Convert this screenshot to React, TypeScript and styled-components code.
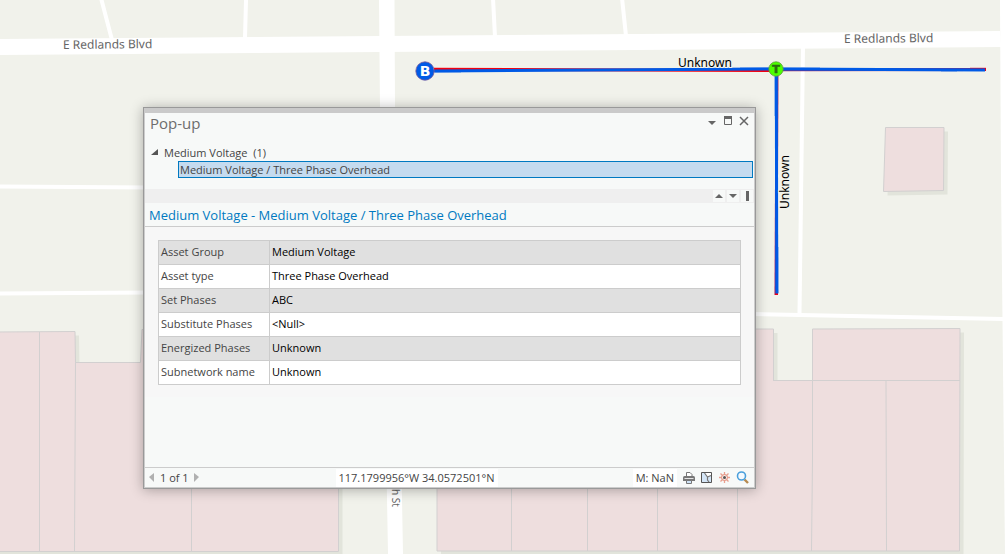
import React from "react";
import styled, { createGlobalStyle } from "styled-components";

const GlobalStyle = createGlobalStyle`
  *, *::before, *::after { box-sizing: border-box; }
  body {
    margin: 0;
    font-family: "Open Sans", "Noto Sans", sans-serif;
    font-size: 11px;
    color: #444;
  }
  button { font: inherit; color: inherit; }
`;

const Stage = styled.main`
  position: relative;
  display: flex;
  min-height: 100vh;
  padding: 107px 250px 65px 143px;
  background: #f1f2eb;
  overflow: hidden;
`;

const MapCanvas = styled.svg`
  position: absolute;
  inset: 0;
  width: 100%;
  height: 100%;
`;

const Popup = styled.section`
  position: relative;
  flex: 1;
  min-width: 0;
  display: flex;
  flex-direction: column;
  border: 1px solid #999;
  box-shadow: 0 1px 12px rgba(0, 0, 0, 0.3);
  background: #f7f9f8;
`;

const TopEdge = styled.div`
  height: 5px;
  background: #cacaca;
`;

const Frame = styled.div`
  flex: 1;
  display: flex;
  flex-direction: column;
  border: solid #ccc;
  border-width: 0 1px 1px;
`;

const TitleBar = styled.header`
  display: flex;
  align-items: flex-start;
  justify-content: space-between;
  height: 22px;
  padding: 0 2px 0 5px;
`;

const Title = styled.h1`
  margin: 0;
  font-size: 15px;
  font-weight: 400;
  line-height: 20px;
  color: #6d6d6d;
`;

const Controls = styled.div`
  display: flex;
`;

const IconButton = styled.button<{ $w?: number; $h?: number; $light?: boolean }>`
  display: flex;
  align-items: center;
  justify-content: center;
  width: ${(p) => p.$w ?? 16}px;
  height: ${(p) => p.$h ?? 16}px;
  padding: 0;
  border: 0;
  background: ${(p) => (p.$light ? "#f7f9f8" : "transparent")};
`;

const Tree = styled.div`
  height: 54px;
  padding-top: 9px;
`;

const GroupButton = styled.button`
  display: flex;
  align-items: center;
  gap: 6px;
  height: 17px;
  padding: 0 0 0 6px;
  border: 0;
  background: none;
  line-height: 17px;
  white-space: pre;
`;

const FeatureButton = styled.button`
  display: block;
  width: calc(100% - 34px);
  height: 17px;
  margin-left: 33px;
  padding: 0 1px;
  border: 1px solid #0079c1;
  background: #c5dbef;
  line-height: 15px;
  text-align: left;
`;

const Splitter = styled.div`
  display: flex;
  justify-content: flex-end;
  align-items: center;
  gap: 2px;
  height: 14px;
  padding-right: 1px;
  background: #efefef;
`;

const FeatureTitle = styled.h2`
  margin: 0;
  height: 24px;
  padding: 0 4px;
  border-bottom: 1px solid #ccc;
  font-size: 13px;
  font-weight: 400;
  line-height: 24px;
  color: #0079c1;
`;

const Body = styled.div`
  flex: 1;
  padding: 13px 13px 12px;
  background: linear-gradient(#f7f7f7 170px, #f7f9f8 170px);
`;

const Table = styled.table`
  width: 100%;
  border-collapse: collapse;
  line-height: 20px;
`;

const Row = styled.tr`
  height: 24px;
  background: #fff;
  &:nth-child(odd) { background: #e0e0e0; }
`;

const Label = styled.th`
  width: 111px;
  padding: 0 2px 1px;
  border: 1px solid #ccc;
  font-weight: 400;
  text-align: left;
  white-space: nowrap;
`;

const Value = styled.td`
  padding: 0 2px 1px;
  border: 1px solid #ccc;
  color: #000;
`;

const Footer = styled.footer`
  display: grid;
  grid-template-columns: 1fr auto 1fr;
  align-items: center;
  height: 20px;
  border-top: 1px solid #ccc;
`;

const Pager = styled.nav`
  display: flex;
  align-items: center;
  gap: 4px;
  padding-left: 3px;
`;

const Field = styled.output`
  padding: 0 3px;
  background: #fff;
  line-height: 18px;
`;

const Coordinates = styled(Field)`
  margin-right: 66px;
`;

const Tools = styled.div`
  display: flex;
  align-items: center;
  justify-content: flex-end;
  padding-right: 2px;
`;

const Measure = styled(Field)`
  margin-right: 3px;
`;

const rows: [string, string][] = [
  ["Asset Group", "Medium Voltage"],
  ["Asset type", "Three Phase Overhead"],
  ["Set Phases", "ABC"],
  ["Substitute Phases", "<Null>"],
  ["Energized Phases", "Unknown"],
  ["Subnetwork name", "Unknown"],
];

const eastBlock = "M437 329H773.5V380.500H812.500V329L960 328.500L959.500 551H437Z";
const westBlock = "M-5 332L75 331.500L75.500 362.500H140.500L142 329.500H338.500V551.500H-5Z";
const house = "M885.500 127.500H944L943.500 190.500L883.500 191.500Z";

function BaseMap() {
  return (
    <MapCanvas viewBox="0 0 1006 554" preserveAspectRatio="xMidYMid slice" role="img" aria-label="Street map with medium voltage lines">
      <g fill="#fff">
        <path d="M0 39L1000 31L1001 47L0 55Z" />
        <path d="M379 0H394.500L395 110L403 554H388L380 110Z" />
        <path d="M1000 0H1006V554H1005L1001 180Z" />
      </g>
      <g stroke="#fff" strokeWidth="4" fill="none">
        <path d="M101 -2L112 40M246 0L245 38M493 -2L495 37M622 -2L626 36" />
        <path d="M803 46L799.500 313" />
        <path d="M750 314L1003 319" />
        <path d="M0 293.500L150 292.500M0 186.500L150 187.500" />
      </g>
      <g fill="#e2e4db" transform="translate(4 4)">
        <path d={eastBlock} />
        <path d={westBlock} />
        <path d={house} />
      </g>
      <g fill="#eedede" stroke="#d2d0d0">
        <path d={eastBlock} />
        <path d={westBlock} />
        <path d={house} />
        <path d="M773 380.500H960M812.500 380V460L811.500 551M886 381L886.500 551M737.500 380V551M657.500 380V551M587.500 380V551M511.500 380V551" />
        <path d="M39.500 332V551M75.500 362L74.500 551M191.500 362V551" />
      </g>

      <g fill="none" strokeWidth="3">
        <path d="M435 72.500H461M740 67.500H820M941 71.500H957" stroke="#b4cbe8" strokeWidth="1" />
        <path d="M774.500 75V116M778.500 247V293" stroke="#b4cbe8" strokeWidth="1" />
        <path d="M434 69.300L776 70.500" stroke="#f00010" />
        <path d="M776 69.700L986 69.500" stroke="#a01b5c" />
        <path d="M970 69.300H986" stroke="#e00020" />
        <path d="M777 69L776 295" stroke="#a01b5c" />
        <path d="M776.500 290V295" stroke="#f00014" />
        <path d="M434 71L776 69L985 70" stroke="#005ae6" />
        <path d="M776.300 69L776.800 293.500" stroke="#005ae6" />
      </g>
      <circle cx="425" cy="71" r="9.200" fill="#005ae6" stroke="#7a5a98" strokeWidth="0.800" />
      <text x="425" y="76" textAnchor="middle" fontFamily="DejaVu Sans, sans-serif" fontWeight="700" fontSize="14" fill="#fff">B</text>
      <circle cx="776" cy="69" r="7.200" fill="#4cff00" stroke="#5e9c3c" strokeWidth="0.800" />
      <text x="776" y="73" textAnchor="middle" fontFamily="DejaVu Sans, sans-serif" fontWeight="700" fontSize="11" fill="#2a6a10" stroke="#2a6a10" strokeWidth="0.700">T</text>

      <g fontFamily="Noto Sans, sans-serif" fontSize="12" fill="#666">
        <text x="63" y="49" transform="rotate(-0.600 63 49)">E Redlands Blvd</text>
        <text x="844" y="43" transform="rotate(-0.600 844 43)">E Redlands Blvd</text>
        <text transform="translate(392 489) rotate(90)" fontSize="10">h St</text>
      </g>
      <g fontFamily="Noto Sans, sans-serif" fontSize="12" fill="#000" stroke="#f1f2eb" strokeWidth="2" paintOrder="stroke">
        <text x="678" y="67">Unknown</text>
        <text transform="translate(789 209) rotate(-90)">Unknown</text>
      </g>
    </MapCanvas>
  );
}

function Caret({ dir, color = "#666" }: { dir: "up" | "down" | "left" | "right"; color?: string }) {
  const d = {
    up: "M0 6L4 2L8 6Z",
    down: "M0 2L4 6L8 2Z",
    left: "M6 0L1 4L6 9Z",
    right: "M1 0L6 4L1 9Z",
  }[dir];
  return (
    <svg width="8" height="9" viewBox="0 0 8 9" fill={color} aria-hidden="true">
      <path d={d} />
    </svg>
  );
}

const OptionsIcon = () => (
  <svg width="10" height="10" viewBox="0 0 10 10" fill="#666" aria-hidden="true">
    <path d="M1 5H9L5 9Z" />
  </svg>
);

const MaximizeIcon = () => (
  <svg width="10" height="10" viewBox="0 0 10 10" aria-hidden="true">
    <path d="M1.500 0.500H8.500V8.500H1.500Z" fill="none" stroke="#666" />
    <path d="M1 0H9V3H1Z" fill="#666" />
  </svg>
);

const CloseIcon = () => (
  <svg width="10" height="10" viewBox="0 0 10 10" fill="none" stroke="#666" strokeWidth="1.500" aria-hidden="true">
    <path d="M1 1L9 9M9 1L1 9" />
  </svg>
);

const PrintIcon = () => (
  <svg width="14" height="14" viewBox="0 0 14 14" aria-hidden="true">
    <path d="M4.500 1.500H8L10 3.500V6H4.500Z" fill="#fff" stroke="#777" />
    <path d="M1 6.500Q1 5 2.500 5H11.500Q13 5 13 6.500V10H1Z" fill="#777" />
    <path d="M2.500 7.500H11.500" stroke="#e4e4e4" />
    <path d="M4.500 9.500H9.500V12.500H4.500Z" fill="#cfe3f6" stroke="#777" />
  </svg>
);

const MapIcon = () => (
  <svg width="14" height="14" viewBox="0 0 14 14" aria-hidden="true">
    <path d="M1.500 1.500H11.500V11.500H1.500Z" fill="#d4e6f7" stroke="#555" />
    <path d="M5 2H11V4.500L7.500 6Z" fill="#fff" />
    <path d="M4.500 2L7.500 6L11 4.500M7.500 6V9L9 11" fill="none" stroke="#777" strokeWidth="1.200" />
  </svg>
);

const FlashIcon = () => (
  <svg width="14" height="14" viewBox="0 0 14 14" fill="none" aria-hidden="true">
    <path d="M6.500 1V3.500M6.500 9.500V12M1 6.500H3.500M9.500 6.500H12M2.500 2.500L4.300 4.300M8.700 8.700L10.500 10.500M10.500 2.500L8.700 4.300M4.300 8.700L2.500 10.500" stroke="#e9a090" strokeWidth="1.300" />
    <circle cx="6.500" cy="6.500" r="3" fill="#fbe9e4" stroke="#e08a76" />
    <circle cx="6.500" cy="6.500" r="1.500" fill="#555" />
  </svg>
);

const SearchIcon = () => (
  <svg width="14" height="14" viewBox="0 0 14 14" fill="none" aria-hidden="true">
    <path d="M8.500 8.500L12 12" stroke="#b68a50" strokeWidth="2.400" />
    <circle cx="5.500" cy="5" r="4" fill="#f4faff" stroke="#4a9fdc" strokeWidth="1.600" />
  </svg>
);

export default function App() {
  return (
    <>
      <GlobalStyle />
      <Stage>
        <BaseMap />
        <Popup aria-label="Pop-up">
          <TopEdge />
          <Frame>
            <TitleBar>
              <Title>Pop-up</Title>
              <Controls>
                <IconButton aria-label="Window options"><OptionsIcon /></IconButton>
                <IconButton aria-label="Maximize"><MaximizeIcon /></IconButton>
                <IconButton aria-label="Close"><CloseIcon /></IconButton>
              </Controls>
            </TitleBar>
            <Tree>
              <GroupButton aria-expanded="true">
                <svg width="7" height="7" viewBox="0 0 7 7" fill="#555" aria-hidden="true">
                  <path d="M7 0V6H0Z" />
                </svg>
                {"Medium Voltage  (1)"}
              </GroupButton>
              <FeatureButton>Medium Voltage / Three Phase Overhead</FeatureButton>
            </Tree>
            <Splitter>
              <IconButton $w={12} $h={12} $light aria-label="Previous feature"><Caret dir="up" /></IconButton>
              <IconButton $w={12} $h={12} $light aria-label="Next feature"><Caret dir="down" /></IconButton>
              <IconButton $w={12} $h={12} $light aria-label="Dock panel">
                <svg width="3" height="10" viewBox="0 0 3 10" fill="#666" aria-hidden="true"><path d="M0 0H3V10H0Z" /></svg>
              </IconButton>
            </Splitter>
            <FeatureTitle>Medium Voltage - Medium Voltage / Three Phase Overhead</FeatureTitle>
            <Body>
              <Table>
                <tbody>
                  {rows.map(([label, value]) => (
                    <Row key={label}>
                      <Label scope="row">{label}</Label>
                      <Value>{value}</Value>
                    </Row>
                  ))}
                </tbody>
              </Table>
            </Body>
            <Footer>
              <Pager aria-label="Features">
                <IconButton $w={8} aria-label="Previous"><Caret dir="left" color="#b0b0b0" /></IconButton>
                <span>1 of 1</span>
                <IconButton $w={8} aria-label="Next"><Caret dir="right" color="#b0b0b0" /></IconButton>
              </Pager>
              <Coordinates>117.1799956°W 34.0572501°N</Coordinates>
              <Tools>
                <Measure>M: NaN</Measure>
                <IconButton $w={18} aria-label="Print"><PrintIcon /></IconButton>
                <IconButton $w={18} aria-label="Zoom to map"><MapIcon /></IconButton>
                <IconButton $w={18} aria-label="Flash"><FlashIcon /></IconButton>
                <IconButton $w={18} aria-label="Search"><SearchIcon /></IconButton>
              </Tools>
            </Footer>
          </Frame>
        </Popup>
      </Stage>
    </>
  );
}
